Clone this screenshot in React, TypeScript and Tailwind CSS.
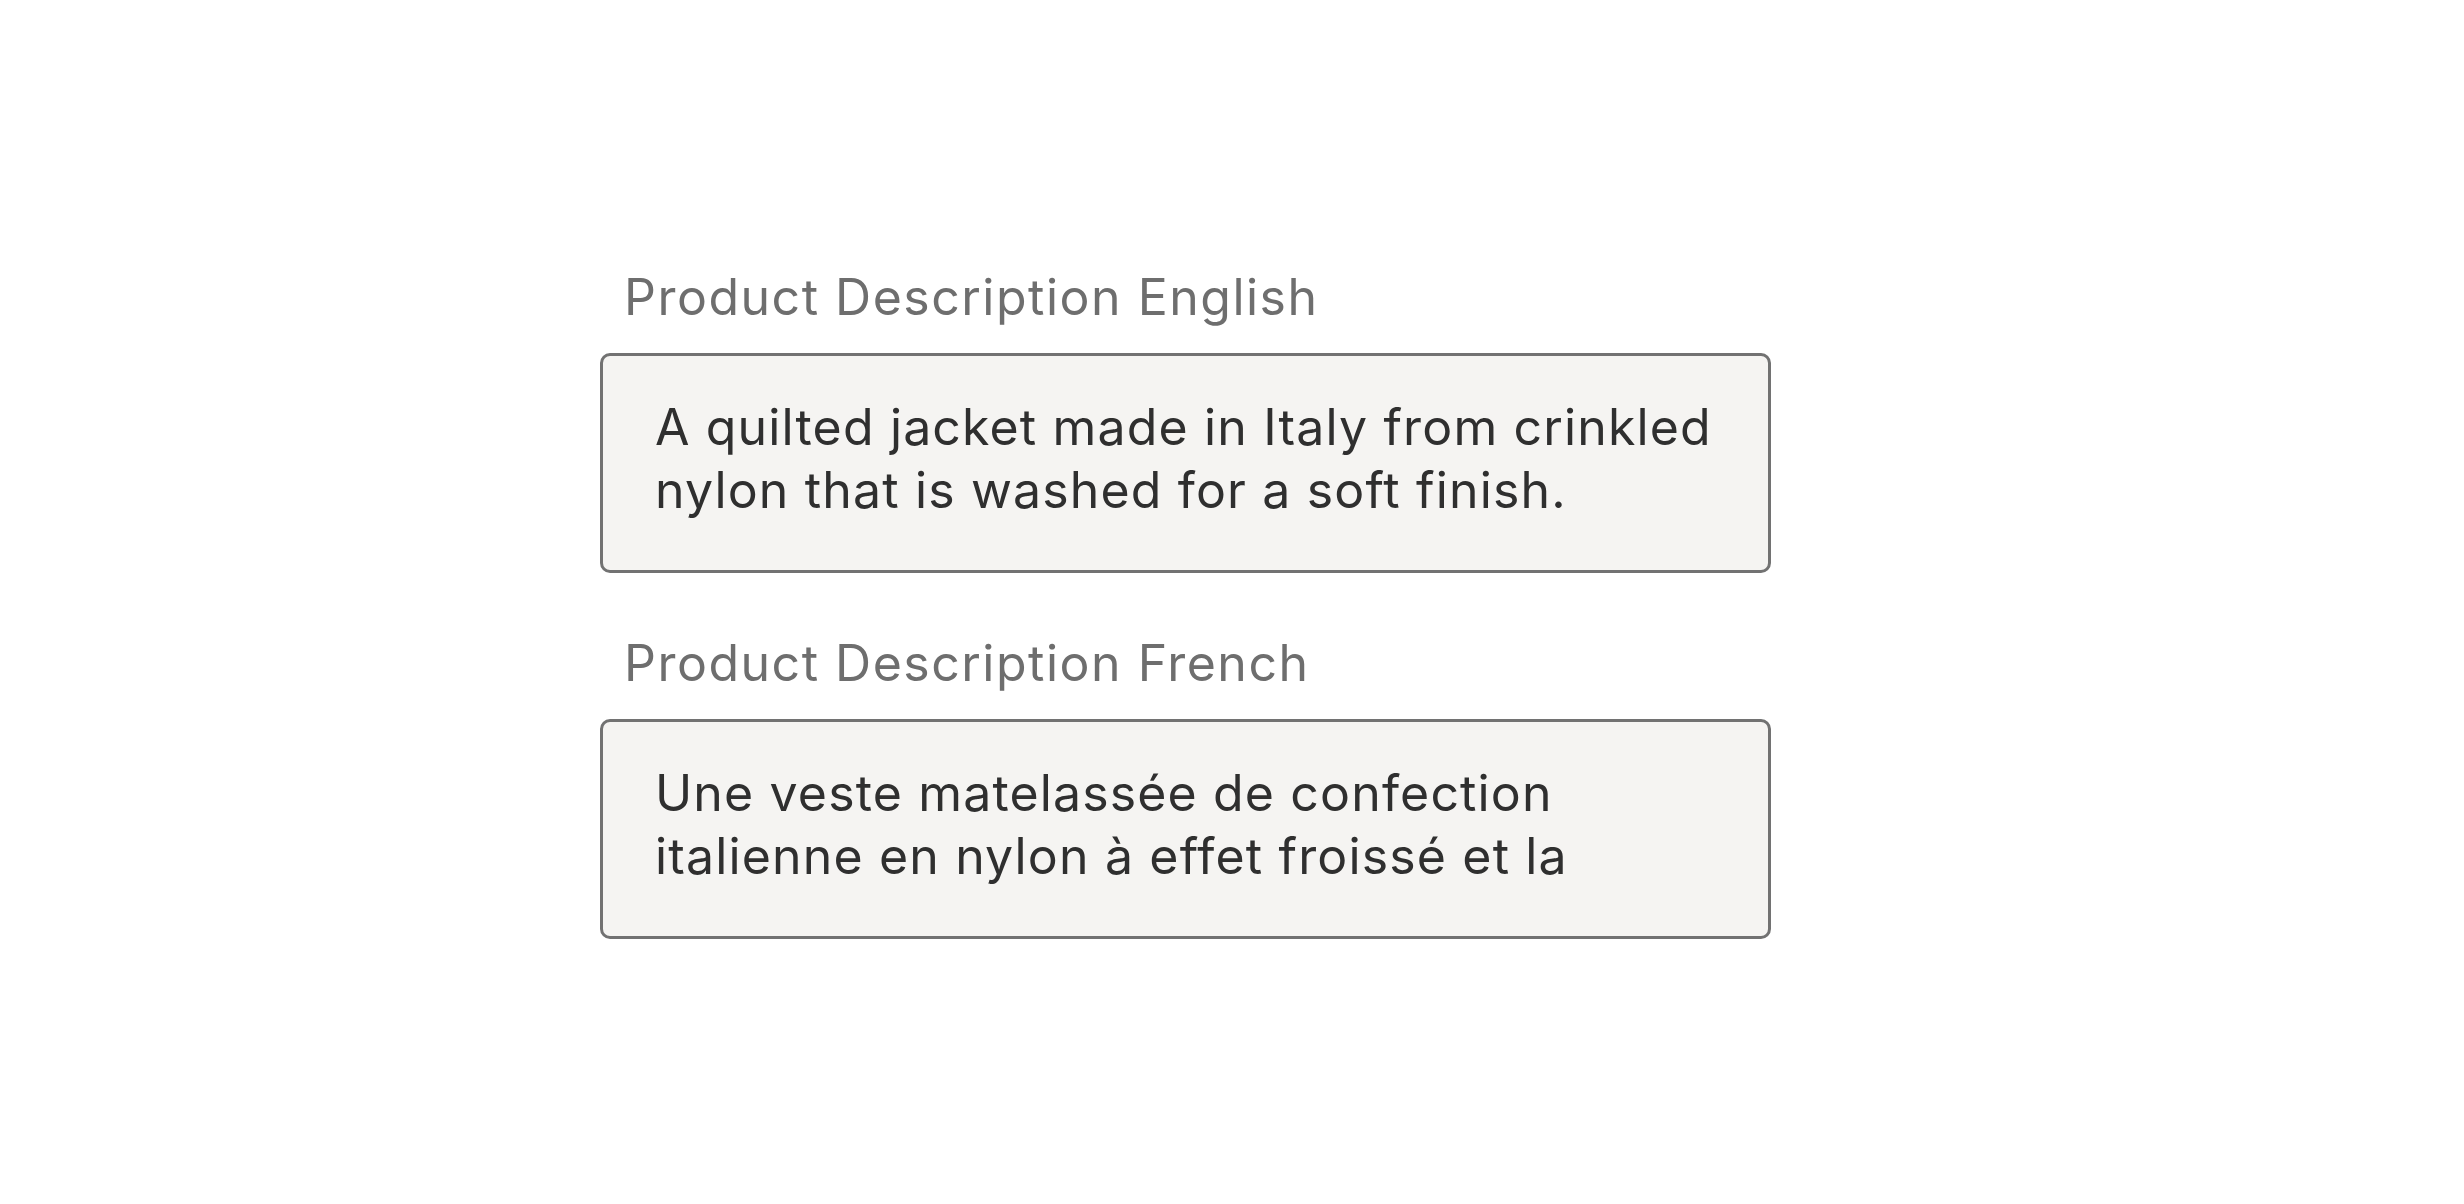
import React from "react";

interface Field {
  label: string;
  value: string;
}

const fields: Field[] = [
  {
    label: "Product Description English",
    value:
      "A quilted jacket made in Italy from crinkled nylon that is washed for a soft finish.",
  },
  {
    label: "Product Description French",
    value:
      "Une veste matelassée de confection italienne en nylon à effet froissé et la",
  },
];

const DescriptionField: React.FC<Field> = ({ label, value }) => (
  <div className="flex flex-col">
    <label className="pl-[24px] text-[50px] leading-[62px] text-[#6e6e6e] tracking-[1.5px]">
      {label}
    </label>
    <div className="mt-[25px] w-[1171px] h-[220px] rounded-[10px] border-[3px] border-[#727272] bg-[#f5f4f2] pl-[52px] pr-[40px] pt-[40px] overflow-hidden">
      <p className="text-[50px] leading-[63px] text-[#2f2f2f] tracking-[1.15px] h-[126px] overflow-hidden">
        {value}
      </p>
    </div>
  </div>
);

export default function App() {
  return (
    <div
      className="w-full h-[1204px] bg-white flex items-center pl-[600px]"
      style={{ fontFamily: "Inter, 'Noto Sans', sans-serif" }}
    >
      <div className="flex flex-col gap-[59px]">
        {fields.map((f) => (
          <DescriptionField key={f.label} label={f.label} value={f.value} />
        ))}
      </div>
    </div>
  );
}
